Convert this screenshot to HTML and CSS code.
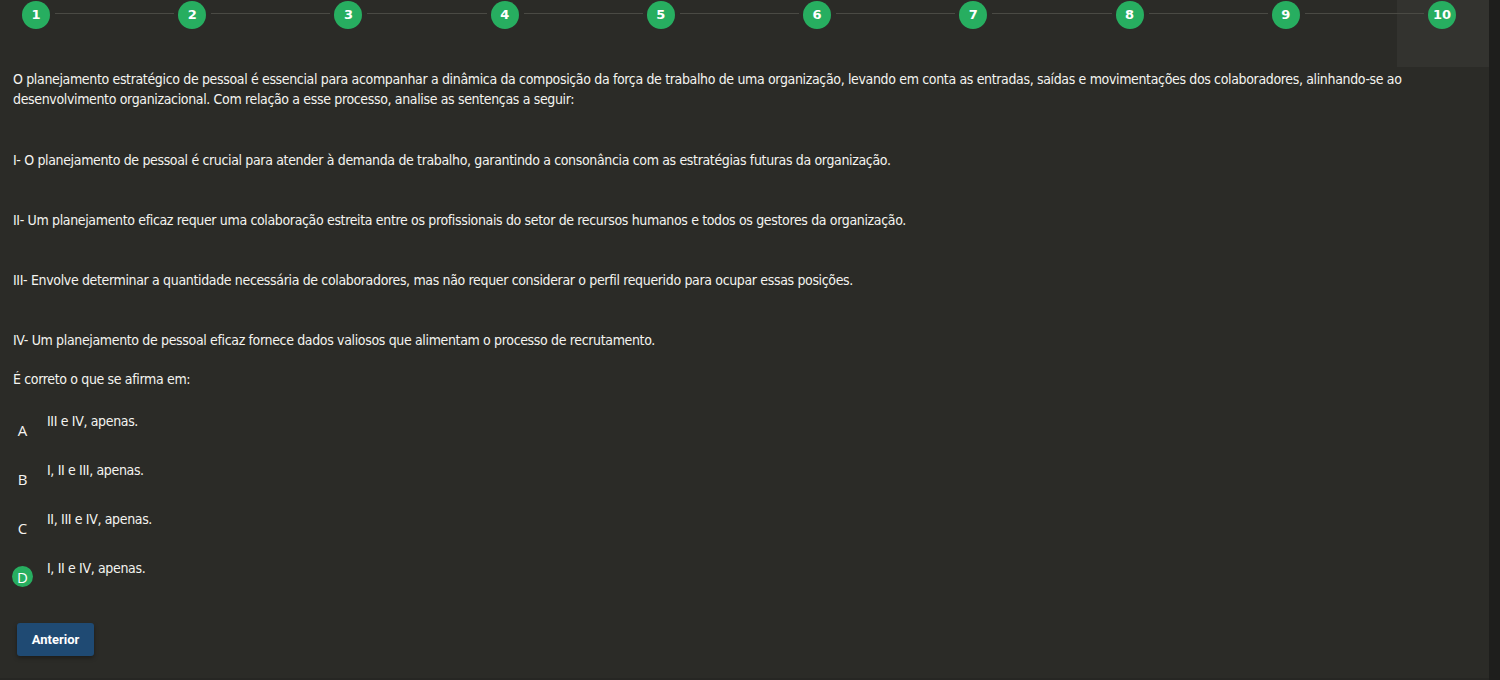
FILE: index.html
```html
<!DOCTYPE html>
<html lang="pt-BR">
<head>
<meta charset="UTF-8">
<title>Questão</title>
<link rel="stylesheet" href="styles.css">
</head>
<body>

<div class="page">
  <div class="quiz">
    <!-- barra de progresso das questões -->
    <nav class="steps">
      <span class="step">1</span><span class="step-line"></span>
      <span class="step">2</span><span class="step-line"></span>
      <span class="step">3</span><span class="step-line"></span>
      <span class="step">4</span><span class="step-line"></span>
      <span class="step">5</span><span class="step-line"></span>
      <span class="step">6</span><span class="step-line"></span>
      <span class="step">7</span><span class="step-line"></span>
      <span class="step">8</span><span class="step-line"></span>
      <span class="step">9</span><span class="step-line"></span>
      <span class="step">10</span>
    </nav>

    <div class="question">
      <p class="lead">O planejamento estratégico de pessoal é essencial para acompanhar a dinâmica da composição da força de trabalho de uma organização, levando em conta as entradas, saídas e movimentações dos colaboradores, alinhando-se ao desenvolvimento organizacional. Com relação a esse processo, analise as sentenças a seguir:</p>
      <p class="item">I- O planejamento de pessoal é crucial para atender à demanda de trabalho, garantindo a consonância com as estratégias futuras da organização.</p>
      <p class="item">II- Um planejamento eficaz requer uma colaboração estreita entre os profissionais do setor de recursos humanos e todos os gestores da organização.</p>
      <p class="item">III- Envolve determinar a quantidade necessária de colaboradores, mas não requer considerar o perfil requerido para ocupar essas posições.</p>
      <p class="item">IV- Um planejamento de pessoal eficaz fornece dados valiosos que alimentam o processo de recrutamento.</p>
      <p class="ask">É correto o que se afirma em:</p>

      <ul class="options">
        <li><span class="letter">A</span><span class="opt-text">III e IV, apenas.</span></li>
        <li><span class="letter">B</span><span class="opt-text">I, II e III, apenas.</span></li>
        <li><span class="letter">C</span><span class="opt-text">II, III e IV, apenas.</span></li>
        <li><span class="letter selected">D</span><span class="opt-text">I, II e IV, apenas.</span></li>
      </ul>

      <button class="btn-prev">Anterior</button>
    </div>
  </div>
  <div class="side-strip"></div>
</div>

</body>
</html>
```

FILE: styles.css
```css
body, html {
  margin: 0;
  height: 100%;
  background: #1e1e1c;
  font-family: 'DejaVu Sans Condensed', 'Liberation Sans', sans-serif;
  color: #f4f4f0;
}

.page {
  display: flex;
  height: 680px;
}

.quiz {
  flex: 1;
  background: #2b2b27;
  border-bottom: 2px solid #262623;
  box-sizing: border-box;
}

.side-strip {
  width: 11px;
  background: #1e1e1c;
}

/* steps */
.steps {
  position: relative;
  display: flex;
  align-items: flex-start;
  padding: 1px 33px 0 22px;
}

.steps::before {
  content: "";
  position: absolute;
  top: 0;
  right: 0;
  width: 92px;
  height: 67px;
  background: #33332f;
}

.step {
  position: relative;
  z-index: 1;
  width: 28px;
  height: 28px;
  border-radius: 50%;
  background: #27ae60;
  color: #fff;
  font-family: 'DejaVu Sans', sans-serif;
  font-weight: bold;
  font-size: 13px;
  line-height: 28px;
  text-align: center;
}

.step-line {
  position: relative;
  z-index: 1;
  flex: 1;
  height: 1px;
  margin: 12px 4px 0 5px;
  background: #4a4a44;
}

/* question text */
.question {
  padding: 0 13px;
  margin-top: 40px;
  font-size: 14px;
  letter-spacing: -0.35px;
  line-height: 20px;
}

.question p {
  margin: 0;
}

.question .item {
  margin-top: 40px;
}

.question .lead + .item {
  margin-top: 41px;
}

.question .ask {
  margin-top: 19px;
}

.options {
  list-style: none;
  margin: 22px 0 0 -1px;
  padding: 0;
  display: flex;
  flex-direction: column;
  gap: 20px;
}

.options li {
  display: flex;
  align-items: flex-start;
}

.letter {
  width: 21px;
  height: 21px;
  margin-top: 8px;
  margin-right: 14px;
  border-radius: 50%;
  font-family: 'Open Sans', sans-serif;
  font-size: 15px;
  letter-spacing: 0;
  line-height: 22px;
  text-align: center;
}

.letter.selected {
  background: #27ae60;
  color: #fff;
}

.btn-prev {
  margin: 36px 0 0 4px;
  width: 77px;
  height: 33px;
  border: none;
  border-radius: 3px;
  background: #1f4a73;
  color: #fff;
  font-family: Roboto, sans-serif;
  font-weight: bold;
  font-size: 13px;
  letter-spacing: 0;
  box-shadow: 0 2px 4px rgba(0, 0, 0, 0.35);
  cursor: pointer;
}
```
